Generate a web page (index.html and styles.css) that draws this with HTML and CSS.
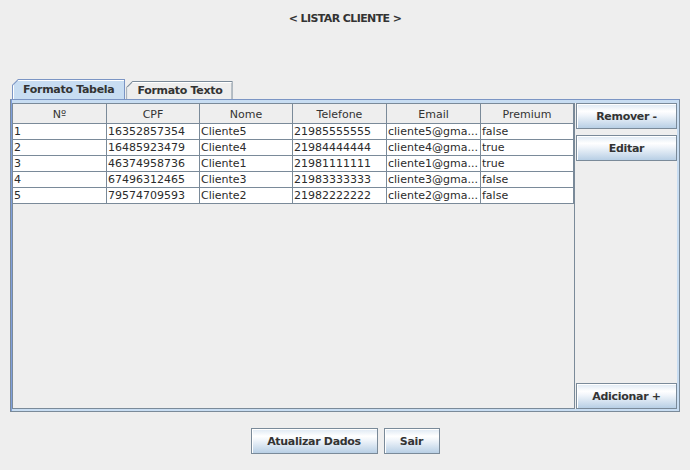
FILE: index.html
```html
<!DOCTYPE html>
<html lang="pt">
<head>
<meta charset="utf-8">
<title>Listar Cliente</title>
<link rel="stylesheet" href="styles.css">
</head>
<body>
<div class="window">
  <h1 class="title">&lt; LISTAR CLIENTE &gt;</h1>
  <div class="tabs">
    <div class="tab-strip">
      <div class="tab selected"><span class="tab-face">Formato Tabela</span></div>
      <div class="tab"><span class="tab-face">Formato Texto</span></div>
    </div>
    <div class="panel">
      <div class="content">
        <div class="scroll">
          <div class="grid" role="table">
            <div class="th">Nº</div><div class="th">CPF</div><div class="th">Nome</div><div class="th">Telefone</div><div class="th">Email</div><div class="th">Premium</div>
            <div class="td">1</div><div class="td">16352857354</div><div class="td">Cliente5</div><div class="td">21985555555</div><div class="td">cliente5@gma...</div><div class="td">false</div>
            <div class="td">2</div><div class="td">16485923479</div><div class="td">Cliente4</div><div class="td">21984444444</div><div class="td">cliente4@gma...</div><div class="td">true</div>
            <div class="td">3</div><div class="td">46374958736</div><div class="td">Cliente1</div><div class="td">21981111111</div><div class="td">cliente1@gma...</div><div class="td">true</div>
            <div class="td">4</div><div class="td">67496312465</div><div class="td">Cliente3</div><div class="td">21983333333</div><div class="td">cliente3@gma...</div><div class="td">false</div>
            <div class="td">5</div><div class="td">79574709593</div><div class="td">Cliente2</div><div class="td">21982222222</div><div class="td">cliente2@gma...</div><div class="td">false</div>
          </div>
        </div>
        <div class="side">
          <button class="btn">Remover -</button>
          <button class="btn">Editar</button>
          <button class="btn push">Adicionar +</button>
        </div>
      </div>
    </div>
  </div>
  <div class="footer">
    <button class="btn wide">Atualizar Dados</button>
    <button class="btn small">Sair</button>
  </div>
</div>
</body>
</html>
```
FILE: styles.css
```css
html, body {
  margin: 0;
  padding: 0;
  background: #eeeeee;
}
body {
  width: 690px;
  height: 470px;
  overflow: hidden;
  font-family: "DejaVu Sans", "Noto Sans", sans-serif;
  color: #333333;
}
.window {
  display: flex;
  flex-direction: column;
}
.title {
  margin: 0;
  padding-top: 12px;
  height: 14px;
  line-height: 14px;
  font-size: 11px;
  font-weight: bold;
  letter-spacing: -0.6px;
  text-align: center;
}
.tabs {
  margin: 54px 0 0 10px;
  width: 670px;
}
.tab-strip {
  display: flex;
  align-items: flex-end;
  padding-left: 2px;
  height: 19px;
}
.tab {
  background: #7a8a99;
  padding: 1px 1px 0 1px;
  clip-path: polygon(6px 0, 100% 0, 100% 100%, 0 100%, 0 6px);
  height: 17px;
}
.tab.selected {
  background: #7b95c4;
  height: 19px;
  margin-right: 1px;
}
.tab-face {
  display: block;
  height: 100%;
  box-sizing: border-box;
  padding: 0 9px 0 10px;
  background: #eeeeee;
  box-shadow: inset 1px 1px 0 #ffffff;
  clip-path: polygon(5.5px 0, 100% 0, 100% 100%, 0 100%, 0 5.5px);
  font-size: 11px;
  font-weight: bold;
  letter-spacing: -0.3px;
  line-height: 17px;
}
.tab.selected .tab-face {
  background: #c8ddf2;
  line-height: 19px;
  padding: 0 10px 0 10px;
}
.panel {
  border: 1px solid #7a8a99;
  border-top-color: #7b95c4;
  background: #c8ddf2;
  padding: 3px 2px 2px 1px;
  box-shadow: inset 1px 0 0 #7f9fdc;
}
.content {
  display: flex;
  height: 306px;
  background: #eeeeee;
}
.scroll {
  width: 563px;
  box-sizing: border-box;
  border: 1px solid #7a8a99;
  background: #eeeeee;
}
.grid {
  display: grid;
  grid-template-columns: 94px 93px 93px 94px 94px 93px;
  grid-template-rows: 20px;
  grid-auto-rows: 16px;
  font-size: 11px;
}
.th, .td {
  box-sizing: border-box;
  border-right: 1px solid #7a8a99;
  border-bottom: 1px solid #7a8a99;
  white-space: nowrap;
  overflow: hidden;
}
.th {
  line-height: 19px;
  padding-top: 1px;
  text-align: center;
  background: #eeeeee;
}
.td {
  background: #ffffff;
  line-height: 14px;
  padding-top: 1px;
  padding-left: 1px;
  color: #2b2b2b;
}
.side {
  display: flex;
  flex-direction: column;
  gap: 6px;
  width: 101px;
  margin-left: 1px;
}
.btn {
  box-sizing: border-box;
  height: 26px;
  margin: 0;
  padding: 0;
  border: 1px solid #7a8a99;
  box-shadow: inset 1px 1px 0 #ffffff;
  background: linear-gradient(to bottom, #dde8f3 0%, #ffffff 30%, #f2f6fb 45%, #dde8f3 65%, #b8cfe5 100%);
  font-family: "DejaVu Sans", "Noto Sans", sans-serif;
  font-size: 11px;
  font-weight: bold;
  letter-spacing: -0.3px;
  color: #333333;
  text-align: center;
}
.push {
  margin-top: auto;
}
.footer {
  display: flex;
  justify-content: center;
  gap: 6px;
  margin-top: 16px;
}
.wide {
  width: 127px;
}
.small {
  width: 56px;
}
```
